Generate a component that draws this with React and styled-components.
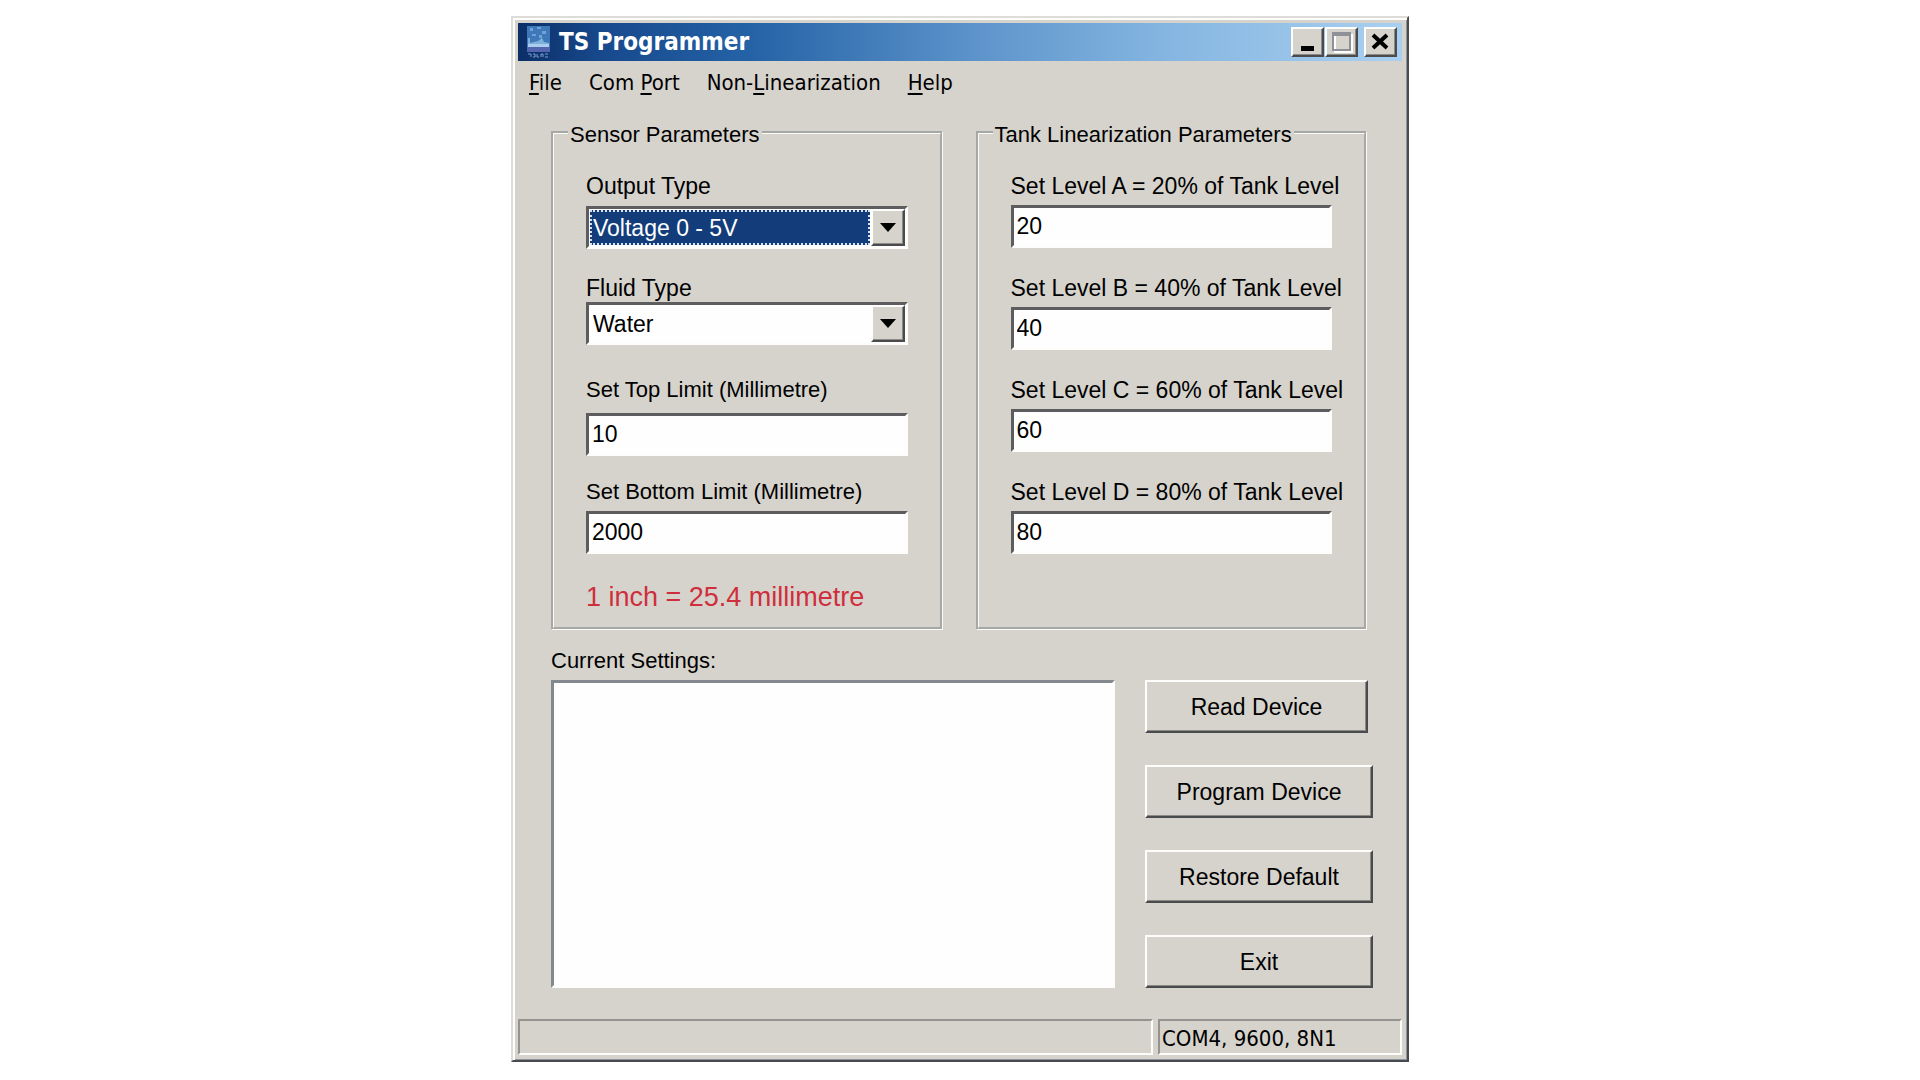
import styled, { createGlobalStyle, css } from 'styled-components';

const GlobalStyle = createGlobalStyle`
  :root {
    --face: #d6d3cc;
    --light: #fdfdfb;
    --shadow: #8b8a86;
    --dark: #4a4b4d;
    --ui-font: 'Liberation Sans', Arial, sans-serif;
    --caption-font: 'DejaVu Sans Condensed', 'DejaVu Sans', sans-serif;
  }

  * {
    box-sizing: border-box;
  }

  body {
    margin: 0;
    background-color: white;
    color: black;
    font-family: var(--ui-font);
    font-size: 23px;
    line-height: 26px;
  }

  button,
  input,
  select,
  textarea {
    font: inherit;
    color: inherit;
    margin: 0;
    border-radius: 0;
    outline: none;
  }
`;

const raised = css`
  border: 2px solid;
  border-color: var(--light) var(--dark) var(--dark) var(--light);
  background-color: var(--face);
  box-shadow: inset -1px -1px var(--shadow);
`;

const sunken = css`
  border: 3px solid;
  border-color: #5d5d5f var(--light) var(--light) #5d5d5f;
  background-color: #fefefe;
`;

const Desktop = styled.main`
  padding: 16px;
`;

const Window = styled.section`
  width: 100%;
  max-width: 898px;
  margin: 0 auto;
  padding: 5px;
  border: 2px solid;
  border-color: #dedcd8 #464b52 #464b52 #dedcd8;
  background-color: var(--face);
  box-shadow: inset 2px 2px var(--light), inset -1px -1px #8f9499;
`;

const TitleBar = styled.header`
  display: flex;
  align-items: center;
  height: 38px;
  padding: 0 5px 0 9px;
  background: linear-gradient(to right, #0b2e66, #17488c 9%, #2462a6 26%, #5d94cb 52%, #83b4e0 72%, #a9d0f0);
`;

const Title = styled.h1`
  flex: 1;
  margin: 0 0 0 9px;
  font-family: var(--caption-font);
  font-size: 24px;
  font-weight: 700;
  line-height: 28px;
  color: white;
`;

const WindowButtons = styled.div`
  display: flex;
  gap: 1px;
`;

const WindowButton = styled.button`
  ${raised}
  display: flex;
  align-items: center;
  justify-content: center;
  width: 33px;
  height: 30px;
  padding: 0;
  margin-left: ${(props) => props.$apart && '5px'};
`;

const MenuBar = styled.nav`
  display: flex;
  gap: 27px;
  padding: 9px 11px;
`;

const MenuItem = styled.button`
  padding: 0;
  border: none;
  background: none;
  font-family: var(--caption-font);
  font-size: 22px;

  & u {
    text-decoration-thickness: 2px;
    text-underline-offset: 3px;
  }
`;

const Content = styled.form`
  padding: 11px 29px 31px 33px;
`;

const Groups = styled.div`
  display: grid;
  grid-template-columns: 1fr 1fr;
  gap: 33px;
  margin-right: 6px;
`;

const GroupBox = styled.fieldset`
  min-width: 0;
  margin: 0;
  padding: 25px 32px 14px 32px;
  border: 3px groove #fbfbf8;
`;

const Legend = styled.legend`
  margin-left: -18px;
  padding: 6px 2px 0;
  font-size: 22px;
`;

const Field = styled.div`
  display: flex;
  flex-direction: column;
  gap: ${(props) => props.$gap}px;
  min-height: 102px;
`;

const Label = styled.label`
  font-size: ${(props) => props.$compact && '22px'};
  white-space: nowrap;
`;

const TextBox = styled.input`
  ${sunken}
  width: 100%;
  height: 43px;
  padding: 0 3px;
`;

const ComboBox = styled.div`
  ${sunken}
  display: flex;
  height: 43px;
`;

const Select = styled.select`
  flex: 1;
  min-width: 0;
  margin: 1px;
  padding: 0 1px;
  appearance: none;
  border: 2px dotted ${(props) => (props.$active ? '#d8e0ee' : 'transparent')};
  background-color: ${(props) => (props.$active ? '#123d7a' : 'transparent')};
  color: ${(props) => props.$active && 'white'};
`;

const Arrow = styled.span`
  ${raised}
  display: flex;
  align-items: center;
  justify-content: center;
  width: 34px;
`;

const Note = styled.p`
  margin: 0;
  font-size: 27px;
  line-height: 32px;
  color: #cf2f3c;
  white-space: nowrap;
`;

const Bottom = styled.div`
  display: grid;
  grid-template-columns: 1fr 228px;
  gap: 6px 30px;
  margin-top: 18px;
`;

const SettingsLabel = styled(Label)`
  grid-column: 1 / -1;
`;

const Settings = styled.textarea`
  ${sunken}
  width: 100%;
  height: 100%;
  border-color: #84898f var(--light) var(--light) #84898f;
  resize: none;
`;

const Actions = styled.div`
  display: flex;
  flex-direction: column;
  gap: 32px;
`;

const ActionButton = styled.button`
  ${raised}
  height: 53px;
  margin-right: ${(props) => props.$narrow && '5px'};
  padding: 0;
`;

const StatusBar = styled.footer`
  display: grid;
  grid-template-columns: 1fr 244px;
  gap: 5px;
`;

const StatusPane = styled.div`
  height: 36px;
  padding: 5px 2px;
  border: 2px solid;
  border-color: #94938f var(--light) var(--light) #94938f;
  font-family: var(--caption-font);
  font-size: 22px;
`;

const menus = [
  ['', 'F', 'ile'],
  ['Com ', 'P', 'ort'],
  ['Non-', 'L', 'inearization'],
  ['', 'H', 'elp'],
];

const levels = [
  { name: 'A', value: 20 },
  { name: 'B', value: 40 },
  { name: 'C', value: 60 },
  { name: 'D', value: 80 },
];

function AppIcon() {
  return (
    <svg width="23" height="32" viewBox="0 0 23 32" aria-hidden="true">
      <rect width="23" height="21" fill="#3f78b8" />
      <path d="M3 2h3v3H3zM10 1h4v2h-4zM15 5h4v3h-4zM5 8h4v2H5zM12 9h3v3h-3z" fill="#6fa3d6" />
      <path d="M1 20V12h2v5l8-2 4-3 2 4 5 1v3z" fill="#7fb0dc" />
      <path d="M1 18h21v3H1z" fill="#a9cdec" />
      <rect y="21" width="23" height="5" fill="#5365ae" />
      <path d="M1 28h3v3M6 28h2v3H6M10 28v3h2M14 31v-3h2v3M18 28h3M18 31h3" fill="none" stroke="#7d9fd0" strokeWidth="1" />
    </svg>
  );
}

function DropDown({ id, value, active }) {
  return (
    <ComboBox>
      <Select id={id} defaultValue={value} $active={active}>
        <option>{value}</option>
      </Select>
      <Arrow>
        <svg width="16" height="9" viewBox="0 0 16 9" aria-hidden="true">
          <path d="M0 0h16L8 9z" />
        </svg>
      </Arrow>
    </ComboBox>
  );
}

export default function App() {
  return (
    <Desktop>
      <GlobalStyle />
      <Window>
        <TitleBar>
          <AppIcon />
          <Title>TS Programmer</Title>
          <WindowButtons>
            <WindowButton aria-label="Minimize">
              <svg width="24" height="22" viewBox="0 0 24 22">
                <path d="M5 15h13v5H5z" />
              </svg>
            </WindowButton>
            <WindowButton aria-label="Maximize" disabled>
              <svg width="24" height="22" viewBox="0 0 24 22">
                <path d="M5 4h17v17H5z" fill="none" stroke="#fdfdfb" strokeWidth="2" />
                <path d="M3 2h17v17H3z" fill="none" stroke="#8e9298" strokeWidth="2" />
                <path d="M3 4h17" stroke="#8e9298" strokeWidth="2" />
              </svg>
            </WindowButton>
            <WindowButton aria-label="Close" $apart>
              <svg width="24" height="22" viewBox="0 0 24 22">
                <path d="M4 4l14 13M18 4L4 17" stroke="black" strokeWidth="4" />
              </svg>
            </WindowButton>
          </WindowButtons>
        </TitleBar>
        <MenuBar>
          {menus.map(([before, key, after]) => (
            <MenuItem key={key}>
              {before}
              <u>{key}</u>
              {after}
            </MenuItem>
          ))}
        </MenuBar>
        <Content onSubmit={(event) => event.preventDefault()}>
          <Groups>
            <GroupBox>
              <Legend>Sensor Parameters</Legend>
              <Field $gap={7}>
                <Label htmlFor="output">Output Type</Label>
                <DropDown id="output" value="Voltage 0 - 5V" active />
              </Field>
              <Field $gap={1}>
                <Label htmlFor="fluid">Fluid Type</Label>
                <DropDown id="fluid" value="Water" />
              </Field>
              <Field $gap={10}>
                <Label htmlFor="top" $compact>
                  Set Top Limit (Millimetre)
                </Label>
                <TextBox id="top" defaultValue="10" />
              </Field>
              <Field $gap={6}>
                <Label htmlFor="bottom" $compact>
                  Set Bottom Limit (Millimetre)
                </Label>
                <TextBox id="bottom" defaultValue="2000" />
              </Field>
              <Note>1 inch = 25.4 millimetre</Note>
            </GroupBox>
            <GroupBox>
              <Legend>Tank Linearization Parameters</Legend>
              {levels.map(({ name, value }) => (
                <Field key={name} $gap={6}>
                  <Label htmlFor={`level-${name}`}>{`Set Level ${name} = ${value}% of Tank Level`}</Label>
                  <TextBox id={`level-${name}`} defaultValue={value} />
                </Field>
              ))}
            </GroupBox>
          </Groups>
          <Bottom>
            <SettingsLabel htmlFor="settings" $compact>
              Current Settings:
            </SettingsLabel>
            <Settings id="settings" />
            <Actions>
              <ActionButton type="button" $narrow>
                Read Device
              </ActionButton>
              <ActionButton type="button">Program Device</ActionButton>
              <ActionButton type="button">Restore Default</ActionButton>
              <ActionButton type="button">Exit</ActionButton>
            </Actions>
          </Bottom>
        </Content>
        <StatusBar>
          <StatusPane />
          <StatusPane>COM4, 9600, 8N1</StatusPane>
        </StatusBar>
      </Window>
    </Desktop>
  );
}
